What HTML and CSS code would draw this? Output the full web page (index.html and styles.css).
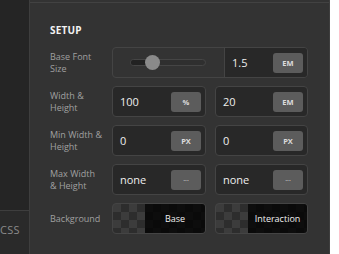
FILE: index.html
```html
<!DOCTYPE html>
<html>
<head>
<meta charset="utf-8">
<link rel="stylesheet" href="styles.css">
</head>
<body>
<div class="app">
  <aside class="sidebar">
    <div class="side-upper"></div>
    <div class="side-tab">CSS</div>
  </aside>
  <main class="panel">
    <div class="panel-top"></div>
    <section class="section">
      <h2 class="section-title">SETUP</h2>
      <div class="rows">
        <div class="label">Base Font<br>Size</div>
        <div class="box slider-box">
          <div class="slider-area">
            <div class="track">
              <div class="track-fill"></div>
              <div class="thumb"></div>
            </div>
          </div>
          <div class="value-area">
            <span class="value">1.5</span>
            <span class="unit">EM</span>
          </div>
        </div>

        <div class="label">Width &amp;<br>Height</div>
        <div class="pair">
          <div class="box field"><span class="value">100</span><span class="unit">%</span></div>
          <div class="box field"><span class="value">20</span><span class="unit">EM</span></div>
        </div>

        <div class="label">Min Width &amp;<br>Height</div>
        <div class="pair">
          <div class="box field"><span class="value">0</span><span class="unit">PX</span></div>
          <div class="box field"><span class="value">0</span><span class="unit">PX</span></div>
        </div>

        <div class="label">Max Width<br>&amp; Height</div>
        <div class="pair">
          <div class="box field"><span class="value">none</span><span class="unit dots">...</span></div>
          <div class="box field"><span class="value">none</span><span class="unit dots">...</span></div>
        </div>

        <div class="label">Background</div>
        <div class="pair">
          <div class="box swatch"><div class="checker"></div><div class="swatch-color">Base</div></div>
          <div class="box swatch"><div class="checker"></div><div class="swatch-color">Interaction</div></div>
        </div>
      </div>
    </section>
  </main>
</div>
</body>
</html>
```
FILE: styles.css
```css
* { box-sizing: border-box; }
html, body { margin: 0; padding: 0; }
body {
  background: #ffffff;
  font-family: "Open Sans", "Noto Sans", sans-serif;
  width: 339px;
  height: 254px;
  overflow: hidden;
}
.app {
  display: flex;
  height: 254px;
}
.sidebar {
  width: 30px;
  background: #252525;
  border-right: 1px solid #3e3e3e;
  display: flex;
  flex-direction: column;
  overflow: hidden;
}
.side-upper {
  height: 211px;
  flex: 0 0 211px;
  border-bottom: 1px solid #3e3e3e;
}
.side-tab {
  background: #2a2a2a;
  flex: 1;
  color: #8a8a8a;
  font-size: 11px;
  line-height: 14px;
  padding-top: 12px;
  padding-left: 0;
  letter-spacing: 0.3px;
}
.panel {
  width: 300px;
  background: #333333;
  border-right: 1px solid #3e3e3e;
  height: 254px;
}
.panel-top {
  height: 3px;
  border-bottom: 1px solid #424242;
}
.section {
  padding: 20px 21px 0 20px;
}
.section-title {
  margin: 0 0 10px 0;
  font-size: 10px;
  line-height: 14px;
  font-weight: 700;
  color: #f2f2f2;
  letter-spacing: 0.2px;
}
.rows {
  display: grid;
  grid-template-columns: 62px 196px;
  grid-auto-rows: 31px;
  row-gap: 8px;
  align-items: center;
}
.label {
  font-size: 9px;
  line-height: 12px;
  color: #a0a0a0;
}
.box {
  height: 31px;
  border: 1px solid #444444;
  border-radius: 4px;
  background: #282828;
}
.pair {
  display: grid;
  grid-template-columns: 94px 93px;
  column-gap: 9px;
}
.field {
  display: flex;
  align-items: center;
  justify-content: space-between;
  padding: 0 4px 0 7px;
}
.value {
  font-size: 11px;
  color: #eeeeee;
}
.unit {
  width: 30px;
  height: 20px;
  border-radius: 3px;
  background: #5c5c5c;
  color: #dddddd;
  font-size: 7.5px;
  font-weight: 700;
  display: flex;
  align-items: center;
  justify-content: center;
}
.unit.dots {
  font-weight: 400;
  font-size: 7px;
  padding-bottom: 2px;
}
.slider-box {
  display: flex;
  background: transparent;
}
.slider-area {
  width: 111px;
  display: flex;
  align-items: center;
  padding-left: 17px;
}
.track {
  position: relative;
  width: 76px;
  height: 7px;
  border: 1px solid #454545;
  border-radius: 4px;
  background: #2f2f2f;
}
.track-fill {
  width: 22px;
  height: 100%;
  background: #222222;
  border-radius: 3px 0 0 3px;
}
.thumb {
  position: absolute;
  left: 14px;
  top: -5px;
  width: 15px;
  height: 15px;
  border-radius: 50%;
  background: #8a8a8a;
}
.value-area {
  flex: 1;
  display: flex;
  align-items: center;
  justify-content: space-between;
  background: #282828;
  border-left: 1px solid #444444;
  border-radius: 0 3px 3px 0;
  padding: 0 4px 0 7px;
}
.swatch {
  display: flex;
  overflow: hidden;
  background-color: #3c3c3c;
  background-image:
    linear-gradient(45deg, #2d2d2d 25%, transparent 25%, transparent 75%, #2d2d2d 75%),
    linear-gradient(45deg, #2d2d2d 25%, transparent 25%, transparent 75%, #2d2d2d 75%);
  background-size: 16px 16px;
  background-position: 0 0, 8px 8px;
}
.checker {
  width: 32px;
  flex: 0 0 32px;
}
.swatch-color {
  flex: 1;
  background: rgba(0, 0, 0, 0.78);
  color: #f0f0f0;
  font-size: 9px;
  display: flex;
  align-items: center;
  justify-content: center;
}
```
